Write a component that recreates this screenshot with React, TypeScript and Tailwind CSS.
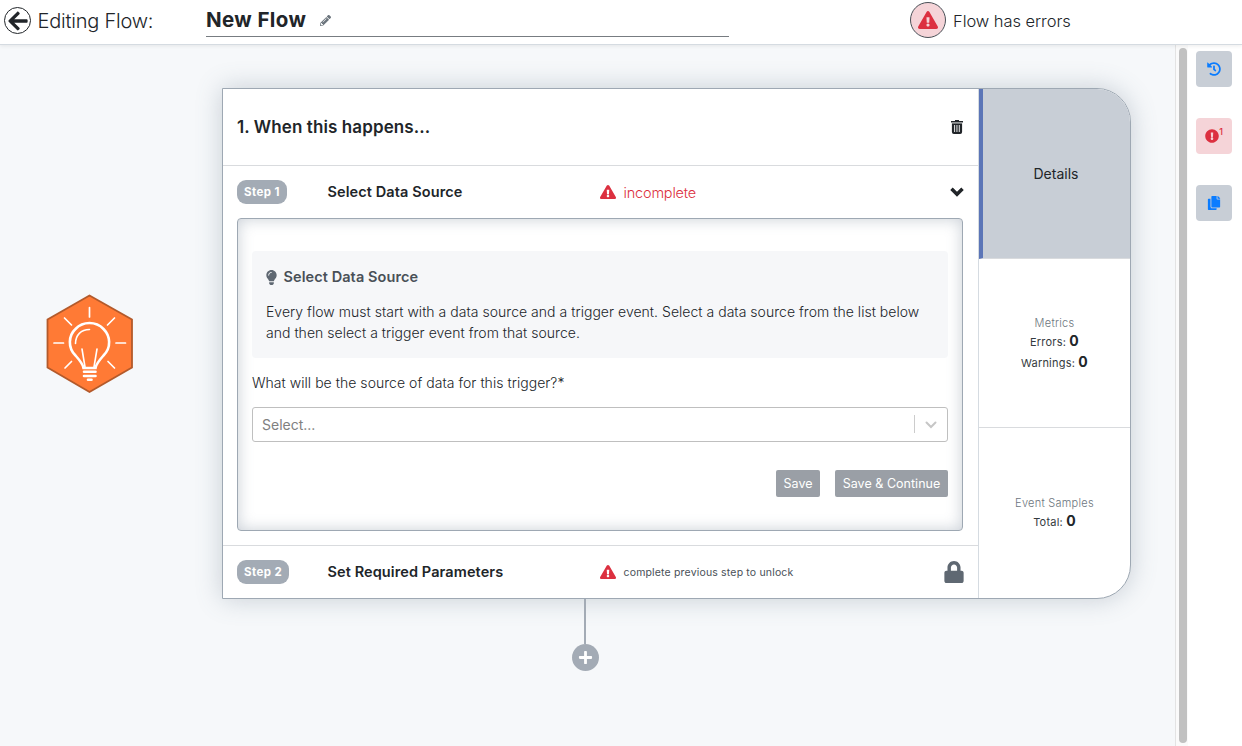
import React from "react";
import {
  FaArrowLeft,
  FaPencilAlt,
  FaExclamationTriangle,
  FaExclamationCircle,
  FaHistory,
  FaCopy,
  FaLock,
  FaPlus,
  FaLightbulb,
} from "react-icons/fa";

function TrashIcon() {
  return (
    <svg width="12" height="14" viewBox="0 0 12 14" className="block">
      <path fill="#212529" d="M4 0h4v1h4v1.6H0V1h4z" />
      <path fill="#9a9da0" d="M.9 2.600h10.200v1H.9z" />
      <path fill="#212529" fillRule="evenodd" d="M.9 3.4h10.2V12a2 2 0 0 1-2 2H2.900a2 2 0 0 1-2-2zM3.200 5v7h.9V5zM5.500 5v7h.9V5zM7.800 5v7h.9V5z" />
    </svg>
  );
}

function IdeaHexagon() {
  return (
    <svg width="88" height="100" viewBox="0 0 88 100" className="block">
      <path d="M43.500 1.500 86 25.500v48L43.500 98 1.500 73.500v-48z" fill="#ff7a35" stroke="#b35a2b" strokeWidth="1.800" />
      <g fill="none" stroke="#fff" strokeLinecap="round">
        <path strokeWidth="1.700" d="M43.500 13.500v9.500M18.500 24l7 7M68.500 24l-7 7M8 49h9.500M70 49h9.500M25.500 67.500l-6.500 6.500M62 67.500l6.500 6.500" />
        <path strokeWidth="2.600" d="M37.500 74c-.5-4-4-8-8-12.500-8-8-7-20 0-26.500a19.500 19.500 0 0 1 28 0c7 7 8 18.500 0 26.500-4 4.500-7.500 8.500-8 12.500z" />
        <path strokeWidth="1.600" d="M29.500 49.500C29.500 41 35 35.500 43.500 35.500M36 55l3 18M51 55l-3 18" />
        <path strokeWidth="2.600" d="M38 77.800h11.500M38 82h11.500" />
        <path strokeWidth="2.600" d="M42 85.800h3.500" />
      </g>
    </svg>
  );
}

function StepRow({ label, title, className, children }: { label: string; title: string; className: string; children: React.ReactNode }) {
  return (
    <div className={"flex items-center pl-[14px] pr-[15px] " + className}>
      <div className="flex w-[90.500px]">
        <span className="inline-flex h-6 items-center rounded-[9px] bg-[#a3abb5] px-[7px] pt-px text-[11.500px] font-bold tracking-[0.4px] text-white">{label}</span>
      </div>
      <div className="w-[272.500px] text-[14.500px] font-semibold tracking-[0.1px] text-[#212529]">{title}</div>
      {children}
    </div>
  );
}

function Count({ label, value }: { label: string; value: number }) {
  return (
    <div className="text-[11px] tracking-[0.2px] text-[#343a40]">
      {label}: <b className="text-[14px] font-bold text-[#212529]">{value}</b>
    </div>
  );
}

export default function App() {
  return (
    <div className="flex h-[746px] w-[1242px] flex-col overflow-hidden bg-[#f6f8fa] font-['Inter',sans-serif] text-[#212529]">
      <header className="z-10 flex h-[45px] shrink-0 border-b border-[#d5dbe1] bg-white shadow-[0_1px_4px_rgba(0,0,0,0.08)]">
        <div className="flex h-[41px] w-[206px] items-center pl-1">
          <span className="flex size-[27px] items-center justify-center rounded-full border border-[#212529]">
            <FaArrowLeft size={22} />
          </span>
          <span className="ml-[6.500px] text-[20px] font-light tracking-[-0.22px]">Editing Flow:</span>
        </div>
        <div className="flex h-[37px] w-[523px] items-center border-b border-[#777c81]">
          <span className="mt-[4px] text-[20.500px] font-bold tracking-[0.4px]">New Flow</span>
          <FaPencilAlt size={11} className="ml-[14px] mt-[4px] text-[#6c757d]" />
        </div>
        <div className="ml-[181px] flex h-[40px] items-center">
          <span className="flex size-9 items-center justify-center rounded-full border border-[#495057] bg-[#f5d4d8] text-[#dc3040]">
            <FaExclamationTriangle size={20} />
          </span>
          <span className="ml-[7px] mt-[2px] text-[16.500px] font-light tracking-[-0.06px]">Flow has errors</span>
        </div>
      </header>
      <div className="flex min-h-0 flex-1">
        <main className="flex w-[1176px] border-r border-[#e3e3e3]">
          <div className="w-[222px] pl-[46px] pt-[248.500px]">
            <IdeaHexagon />
          </div>
          <div className="w-[909px] pt-[43px]">
            <div className="flex h-[511px] overflow-hidden rounded-r-[34px] border border-[#9ea8b3] bg-white shadow-[0_0_26px_rgba(90,110,130,0.3)]">
              <section className="w-[755px]">
                <div className="flex h-[77px] items-center justify-between border-b border-[#d9dbde] pl-[14px] pr-[15px]">
                  <h2 className="mt-[2px] text-[17px] font-semibold tracking-[0.1px]">1. When this happens...</h2>
                  <TrashIcon />
                </div>
                <StepRow label="Step 1" title="Select Data Source" className="h-[52px] [&_span]:first:leading-none">
                  <FaExclamationTriangle size={16} className="-mt-px text-[#dc3040]" />
                  <span className="ml-[7.500px] mt-px flex-1 text-[14.500px] font-light tracking-[-0.18px] text-[#dc3040]">incomplete</span>
                  <svg width="14" height="10" viewBox="0 0 14 10" fill="none" stroke="#212529" strokeWidth="3.500" className="-mr-[0.500px]">
                    <path d="m1.500 1.800 5.500 5.500 5.500-5.500" />
                  </svg>
                </StepRow>
                <div className="ml-[14px] mr-[15px] h-[313px] rounded border border-[#9ea8b3] px-[14px] pt-8 shadow-[inset_0_0_15px_rgba(90,110,130,0.33)]">
                  <div className="h-[107px] rounded bg-[#f6f7f9] px-[14px] pt-[15px]">
                    <div className="flex h-[22px] items-center text-[14.500px] font-semibold tracking-[0.08px] text-[#495057]">
                      <FaLightbulb size={15} className="-ml-[2.500px] mr-[5px] text-[#5f6872]" />
                      Select Data Source
                    </div>
                    <p className="mt-[13px] whitespace-nowrap text-[14px] font-light leading-[21px] tracking-[0.03px]">
                      Every flow must start with a data source and a trigger event. Select a data source from the list below<br />
                      and then select a trigger event from that source.
                    </p>
                  </div>
                  <div className="mt-[14px] text-[14px] font-light leading-[21px] tracking-[0.04px]">What will be the source of data for this trigger?*</div>
                  <div className="mt-[14px] flex h-[35px] items-center rounded-[3px] border border-[#bfbfbf] bg-white pl-[9px]">
                    <span className="flex-1 text-[14px] text-[#808080]">Select...</span>
                    <span className="-mt-px h-[18px] w-px bg-[#ccc]" />
                    <svg width="32" height="18" viewBox="0 0 32 18" fill="none" stroke="#c6c6c6" strokeWidth="2" strokeLinecap="round">
                      <path d="m11.500 6.500 4.500 4.500 4.500-4.500" />
                    </svg>
                  </div>
                  <div className="mt-7 flex justify-end gap-[15px] text-[12.500px] tracking-[0.03px] text-white">
                    <button className="h-[27px] w-[44px] rounded-[2px] bg-[#9a9fa6] pt-px">Save</button>
                    <button className="h-[27px] w-[113px] rounded-[2px] bg-[#9a9fa6] pt-px">Save &amp; Continue</button>
                  </div>
                </div>
                <StepRow label="Step 2" title="Set Required Parameters" className="mt-[14px] h-[53px] border-t border-[#d9dbde]">
                  <FaExclamationTriangle size={16} className="text-[#dc3040]" />
                  <span className="ml-[7.500px] mt-[2px] flex-1 text-[10.500px] tracking-[0.17px] text-[#495057]">complete previous step to unlock</span>
                  <FaLock size={22} className="-mr-[1.500px] text-[#5f6872]" />
                </StepRow>
              </section>
              <aside className="flex w-[152px] flex-col border-l border-[#d5dbe1]">
                <div className="flex h-[170px] items-center justify-center border-b border-l-4 border-b-[#d9dbde] border-l-[#5b75b7] bg-[#c8ced6] pr-px text-[14px]">Details</div>
                <div className="flex h-[169px] flex-col items-center justify-center border-b border-[#d9dbde]">
                  <div className="mb-[-1px] mt-[1px] text-[11px] font-light tracking-[0.25px] text-[#6c757d]">Metrics</div>
                  <Count label="Errors" value={0} />
                  <Count label="Warnings" value={0} />
                </div>
                <div className="flex flex-1 flex-col items-center justify-center">
                  <div className="mb-[-1px] text-[11px] font-light tracking-[0.25px] text-[#6c757d]">Event Samples</div>
                  <Count label="Total" value={0} />
                </div>
              </aside>
            </div>
            <div className="flex w-[726px] flex-col items-center">
              <div className="h-[45px] w-[2px] bg-[#a3abb5]" />
              <div className="flex size-[27px] items-center justify-center rounded-full bg-[#a3abb5] text-white">
                <FaPlus size={15} />
              </div>
            </div>
          </div>
        </main>
        <div className="w-3 bg-[#fafafa] pl-[3px] pt-[3px]">
          <div className="h-[695px] w-2 rounded bg-[#c1c1c1]" />
        </div>
        <nav className="flex flex-1 flex-col gap-[31px] bg-white pl-2 pt-[6px] text-[#0a7cff]">
          <button className="flex size-9 items-center justify-center rounded bg-[#c8ced6]"><FaHistory size={14} /></button>
          <button className="flex size-9 items-center justify-center rounded bg-[#f5d4d8] text-[#dc3040]">
            <FaExclamationCircle size={14} />
            <sup className="text-[9px] font-medium">1</sup>
          </button>
          <button className="flex size-9 items-center justify-center rounded bg-[#c8ced6]"><FaCopy size={14} /></button>
        </nav>
      </div>
    </div>
  );
}
